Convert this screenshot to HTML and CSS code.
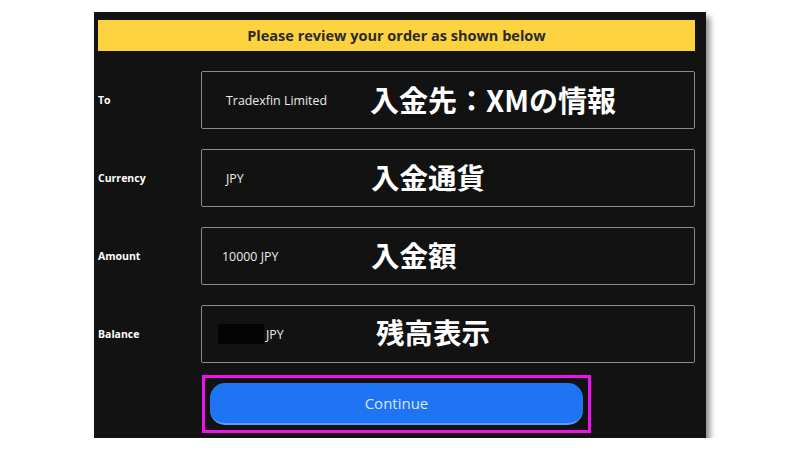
FILE: index.html
```html
<!DOCTYPE html>
<html lang="ja">
<head>
<meta charset="utf-8">
<title>Review order</title>
<link rel="stylesheet" href="styles.css">
</head>
<body>
<div class="panel">
  <div class="header">Please review your order as shown below</div>
  <div class="rows">
    <div class="label">To</div>
    <div class="box">
      <span class="value">Tradexfin Limited</span>
      <span class="note note-to">入金先：XMの情報</span>
    </div>
    <div class="label">Currency</div>
    <div class="box">
      <span class="value">JPY</span>
      <span class="note">入金通貨</span>
    </div>
    <div class="label">Amount</div>
    <div class="box">
      <span class="value value-amount">10000 JPY</span>
      <span class="note">入金額</span>
    </div>
    <div class="label">Balance</div>
    <div class="box">
      <span class="value value-balance"><span class="mask"></span>JPY</span>
      <span class="note note-balance">残高表示</span>
    </div>
  </div>
  <div class="highlight">
    <button class="continue" type="button">Continue</button>
  </div>
</div>
</body>
</html>
```

FILE: styles.css
```css
html, body {
  margin: 0;
  padding: 0;
  background: #ffffff;
}

body {
  font-family: "Open Sans", "Liberation Sans", sans-serif;
}

.panel {
  box-sizing: border-box;
  margin: 12px 0 0 94px;
  width: 612px;
  height: 426px;
  padding: 8px 11px 5px 4px;
  background: #121212;
  box-shadow: 4px 5px 6px rgba(0, 0, 0, 0.45);
  display: flex;
  flex-direction: column;
}

.header {
  height: 31px;
  background: #fcd23e;
  color: #2a2a2a;
  font-weight: 700;
  font-size: 14.5px;
  display: flex;
  align-items: center;
  justify-content: center;
}

.rows {
  margin-top: 20px;
  display: grid;
  grid-template-columns: 103px 1fr;
  grid-auto-rows: 58px;
  row-gap: 20px;
}

.label {
  display: flex;
  align-items: center;
  color: #ffffff;
  font-weight: 700;
  font-size: 10.5px;
}

.box {
  box-sizing: border-box;
  border: 1px solid #8a8a8a;
  border-radius: 2px;
  display: grid;
  grid-template-columns: 169px 1fr;
  align-items: center;
}

.value {
  padding-left: 24px;
  color: #ececec;
  font-size: 12.4px;
  display: flex;
  align-items: center;
}

.value-amount {
  padding-left: 20px;
}

.value-balance {
  padding-left: 16px;
}

.mask {
  display: inline-block;
  width: 46px;
  height: 20px;
  background: #040404;
  margin-right: 2px;
}

.note {
  color: #ffffff;
  font-family: "Noto Sans CJK JP", sans-serif;
  font-weight: 700;
  font-size: 28.5px;
  line-height: 1;
  margin-top: -2px;
}

.note-to {
  margin-left: -1px;
  font-size: 29px;
}

.note-balance {
  padding-left: 5px;
  margin-top: -4px;
}

.highlight {
  box-sizing: border-box;
  margin: 12px 0 0 104px;
  width: 389px;
  height: 58px;
  border: 3px solid #f010f0;
  padding: 5px;
}

.continue {
  display: block;
  width: 100%;
  height: 42px;
  border: none;
  border-bottom: 2px solid #5d9cf6;
  border-radius: 15px;
  background: #1f74f3;
  color: #d9e6fc;
  font-family: "Open Sans", "Liberation Sans", sans-serif;
  font-size: 15px;
  padding: 0;
}
```
